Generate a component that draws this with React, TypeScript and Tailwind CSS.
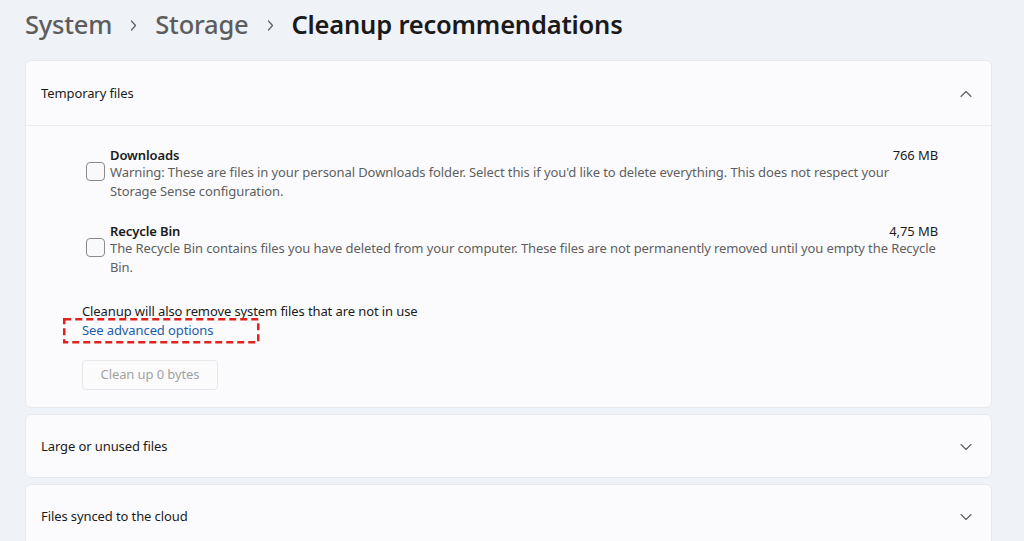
import React from "react";

const font = { fontFamily: '"Noto Sans", "Open Sans", sans-serif' };

function Chevron({ up }: { up?: boolean }) {
  return (
    <svg width="12" height="8" viewBox="0 0 12 8" className="text-[#5c5c5c]">
      <polyline
        points={up ? "1,6.5 6,1.5 11,6.5" : "1,1.5 6,6.5 11,1.5"}
        fill="none"
        stroke="currentColor"
        strokeWidth={1.1}
        strokeLinecap="round"
        strokeLinejoin="round"
      />
    </svg>
  );
}

function CrumbChevron() {
  return (
    <svg width="7" height="11" viewBox="0 0 7 11" className="text-[#5d5d5d] mt-[2px]">
      <polyline points="1.5,1 5.5,5.5 1.5,10" fill="none" stroke="currentColor" strokeWidth={1.2} strokeLinecap="round" strokeLinejoin="round" />
    </svg>
  );
}

function Checkbox() {
  return <span className="block w-[19px] h-[19px] rounded-[4px] border border-[#8a8a8a] bg-[#f9f9fb] shrink-0" />;
}

interface CleanupItem {
  title: string;
  size: string;
  description: string;
}

const items: CleanupItem[] = [
  {
    title: "Downloads",
    size: "766 MB",
    description:
      "Warning: These are files in your personal Downloads folder. Select this if you'd like to delete everything. This does not respect your Storage Sense configuration.",
  },
  {
    title: "Recycle Bin",
    size: "4,75 MB",
    description:
      "The Recycle Bin contains files you have deleted from your computer. These files are not permanently removed until you empty the Recycle Bin.",
  },
];

function CollapsedCard({ label }: { label: string }) {
  return (
    <div className="h-[64px] rounded-[6px] border border-[#e8e9ec] bg-[#fbfbfd] flex items-center justify-between pl-[15px] pr-[19px] pt-[2px]">
      <span className="text-[#1b1b1b]">{label}</span>
      <Chevron />
    </div>
  );
}

export default function App() {
  return (
    <div className="w-[1024px] h-[541px] overflow-hidden bg-[#eff2f7] pl-[25px] pr-[32px]" style={font}>
      {/* Breadcrumb */}
      <div className="h-[60px] flex items-center gap-[18px] pb-[11px] text-[25.5px] leading-none tracking-[-0.2px]">
        <span className="text-[#5d5d5d] font-medium">System</span>
        <CrumbChevron />
        <span className="text-[#5d5d5d] font-medium">Storage</span>
        <CrumbChevron />
        <span className="text-[#1a1a1a] font-semibold">Cleanup recommendations</span>
      </div>

      <div className="flex flex-col gap-[6px] text-[13px] tracking-[-0.1px]">
        {/* Temporary files */}
        <div className="rounded-[6px] border border-[#e8e9ec] bg-[#fbfbfd]">
          <div className="h-[65px] flex items-center justify-between pl-[15px] pr-[19px] pt-[2px] border-b border-[#ebecef]">
            <span className="text-[#1b1b1b]">Temporary files</span>
            <Chevron up />
          </div>

          <div className="pl-[60px] pr-[53px] pt-[21px] pb-[17px]">
            <div className="flex flex-col gap-[22px]">
              {items.map((item) => (
                <div key={item.title} className="flex items-start gap-[5px]">
                  <div className="pt-[15px]">
                    <Checkbox />
                  </div>
                  <div className="flex-1">
                    <div className="flex items-center justify-between leading-[16px]">
                      <span className="font-semibold text-[#1a1a1a]">{item.title}</span>
                      <span className="text-[#1b1b1b]">{item.size}</span>
                    </div>
                    <p className="leading-[19px] text-[#5f5f5f]">{item.description}</p>
                  </div>
                </div>
              ))}
            </div>

            <div className="mt-[25px] ml-[-4px]">
              <p className="leading-[19px] text-[#1b1b1b]">Cleanup will also remove system files that are not in use</p>
              <div className="relative w-fit leading-[19px]">
                <a className="text-[#1f5da8] cursor-pointer">See advanced options</a>
                <svg className="absolute left-[-19px] top-[-3px]" width="197" height="26" viewBox="0 0 197 26">
                  <rect x="1.25" y="1.25" width="194" height="23" fill="none" stroke="#e3211c" strokeWidth={2.5} strokeDasharray="7 4" />
                </svg>
              </div>
              <div className="mt-[20px]">
                <button
                  disabled
                  className="h-[30px] w-[136px] rounded-[4px] border border-[#e6e7ea] bg-[#fbfbfc] text-[#a2a2a2]"
                >
                  Clean up 0 bytes
                </button>
              </div>
            </div>
          </div>
        </div>

        <CollapsedCard label="Large or unused files" />
        <CollapsedCard label="Files synced to the cloud" />
      </div>
    </div>
  );
}
